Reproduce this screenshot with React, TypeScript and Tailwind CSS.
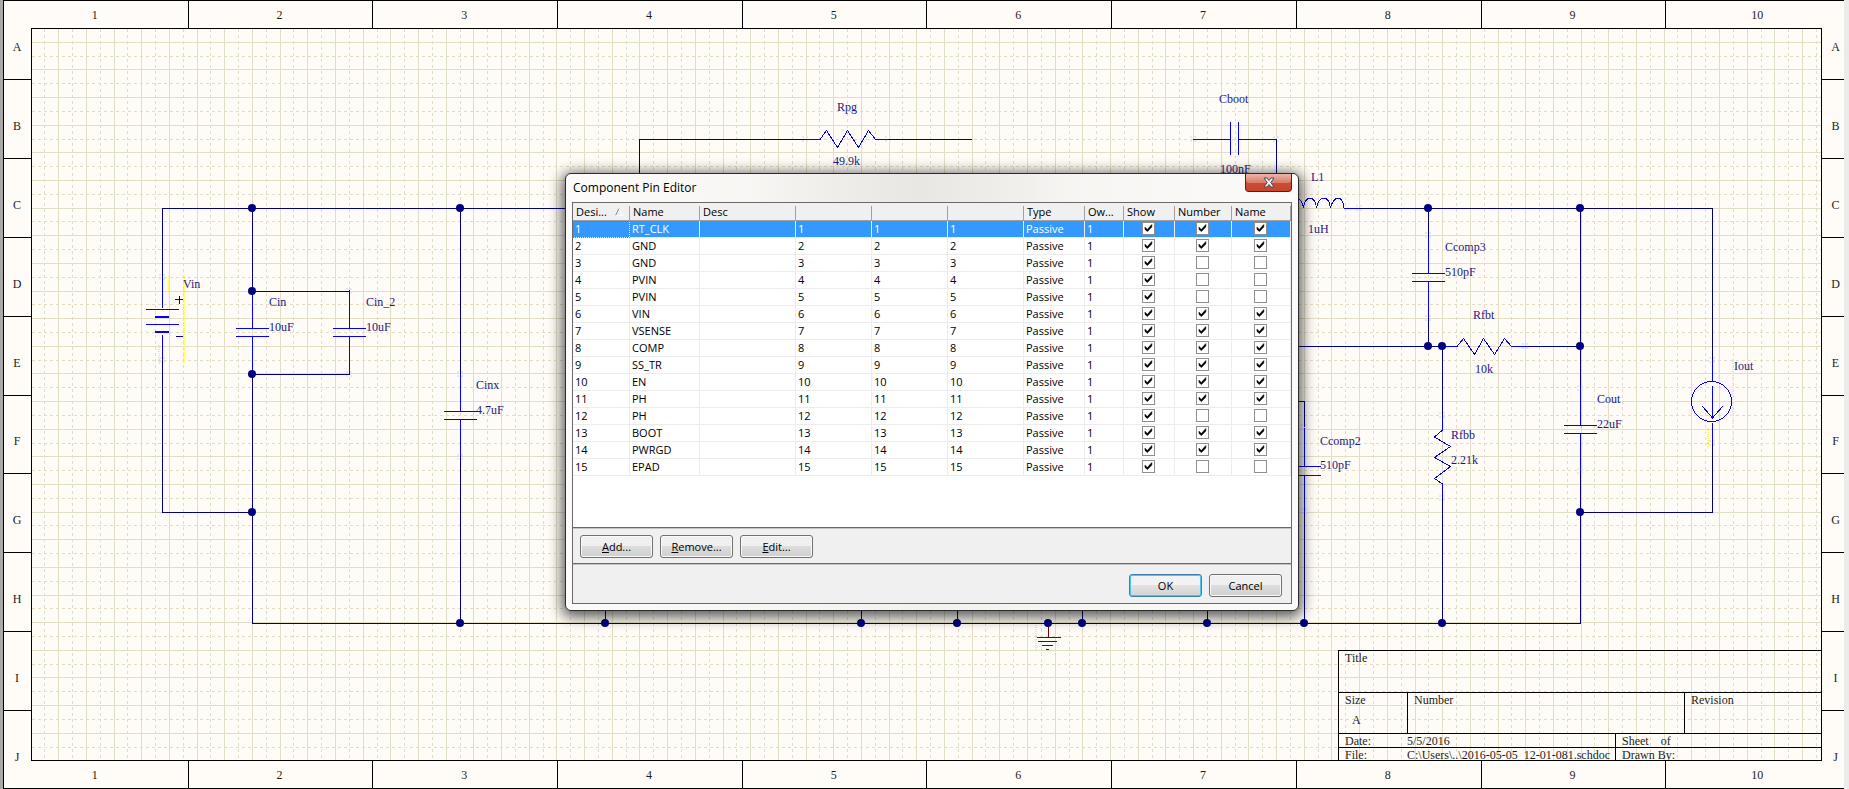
import type { ReactNode } from "react";

const COLUMNS = [1, 2, 3, 4, 5, 6, 7, 8, 9, 10];
const ROWS = ["A", "B", "C", "D", "E", "F", "G", "H", "I", "J"];

type Pin = { id: number; name: string; visible: boolean };

const PINS: Pin[] = [
  { id: 1, name: "RT_CLK", visible: true },
  { id: 2, name: "GND", visible: true },
  { id: 3, name: "GND", visible: false },
  { id: 4, name: "PVIN", visible: false },
  { id: 5, name: "PVIN", visible: false },
  { id: 6, name: "VIN", visible: true },
  { id: 7, name: "VSENSE", visible: true },
  { id: 8, name: "COMP", visible: true },
  { id: 9, name: "SS_TR", visible: true },
  { id: 10, name: "EN", visible: true },
  { id: 11, name: "PH", visible: true },
  { id: 12, name: "PH", visible: false },
  { id: 13, name: "BOOT", visible: true },
  { id: 14, name: "PWRGD", visible: true },
  { id: 15, name: "EPAD", visible: false },
];

const WIRES = [
  "M162.5 276V208.5H1289",
  "M162.5 360V512.5H252",
  "M252.5 208V291.5H349.5",
  "M349.5 374.5H252.5V623.5H1580.5V471",
  "M460.5 208V373M460.5 457V623",
  "M639.5 200V139.5H805M888 139.5H972",
  "M1276.5 139V200",
  "M1359 208.5H1712.5V360",
  "M1428.5 208V235M1428.5 319V346",
  "M1100 346.5H1442M1528 346.5H1580",
  "M1580.5 208V388",
  "M1712.5 444V512.5H1580",
  "M1442.5 346V415M1442.5 498V623",
  "M1290 401.5H1304.5V427M1304.5 512V623",
  "M605.5 600V623M861.5 600V623M957.5 600V623M1082.5 600V623M1207.5 600V623",
];

const JUNCTIONS = [
  [252, 208], [460, 208], [252, 291], [252, 374], [252, 512],
  [1428, 208], [1580, 208], [1428, 346], [1442, 346], [1580, 346], [1580, 512],
  [460, 623], [605, 623], [861, 623], [957, 623], [1048, 623],
  [1082, 623], [1207, 623], [1304, 623], [1442, 623],
];

// Pin hot spots
const HOTSPOTS = [
  [162, 277], [162, 360], [349, 291], [349, 374], [460, 374], [460, 457],
  [805, 139], [888, 139], [1193, 139], [1276, 139], [1359, 208],
  [1428, 235], [1428, 318], [1525, 346], [1442, 415], [1442, 498],
  [1580, 388], [1580, 471], [1712, 360], [1712, 443], [1304, 427], [1304, 511],
];

const LABELS: [number, number, string][] = [
  [183, 288, "Vin"],
  [269, 306, "Cin"],
  [269, 331, "10uF"],
  [366, 306, "Cin_2"],
  [366, 331, "10uF"],
  [476, 389, "Cinx"],
  [476, 414, "4.7uF"],
  [837, 111, "Rpg"],
  [833, 165, "49.9k"],
  [1219, 103, "Cboot"],
  [1220, 173, "100nF"],
  [1311, 181, "L1"],
  [1308, 233, "1uH"],
  [1445, 251, "Ccomp3"],
  [1445, 276, "510pF"],
  [1473, 319, "Rfbt"],
  [1475, 373, "10k"],
  [1451, 439, "Rfbb"],
  [1451, 464, "2.21k"],
  [1597, 403, "Cout"],
  [1597, 428, "22uF"],
  [1734, 370, "Iout"],
  [1320, 445, "Ccomp2"],
  [1320, 469, "510pF"],
];

function SheetGrid() {
  const paths: ReactNode[] = [];
  for (let i = 1; i < 130; i++) {
    const x = Math.floor(31 + (i * 27.68) / 2) + 0.5;
    paths.push(
      <path key={`v${i}`} d={`M${x} 29V2000`} strokeDasharray={i % 2 ? "3 3" : undefined} />
    );
  }
  for (let i = 1; i < 54; i++) {
    const y = Math.floor(760.9 - (i * 27.64) / 2) + 0.5;
    paths.push(
      <path key={`h${i}`} d={`M32 ${y}H4000`} strokeDasharray={i % 2 ? "3 3" : undefined} />
    );
  }
  return <g stroke="#e3ddc5">{paths}</g>;
}

function Capacitor({ x, y, gap = 8 }: { x: number; y: number; gap?: number }) {
  const c = x + 0.5;
  return (
    <path
      d={`M${c} ${y - 38}V${y}M${x - 16} ${y + 0.5}h33M${x - 16} ${y + gap + 0.5}h33M${c} ${y + gap}v38`}
    />
  );
}

function Schematic() {
  return (
    <svg className="absolute inset-0 size-full" aria-label="Schematic">
      <g transform="translate(-32 -29)" fill="none" shapeRendering="crispEdges">
        <SheetGrid />

        <g fill="#e4ebf7">
          {HOTSPOTS.map(([x, y]) => (
            <path
              key={`${x}-${y}`}
              d={`M${x - 3} ${y - 3}h2v2h-2zM${x + 1} ${y - 3}h2v2h-2zM${x - 3} ${y + 1}h2v2h-2zM${x + 1} ${y + 1}h2v2h-2z`}
            />
          ))}
        </g>

        <path d={WIRES.join("")} stroke="#000080" />

        <g stroke="#0000ff">
          {/* Battery */}
          <path d="M162.5 276V308M146 309.5H179M146 324.5H179M162.5 335V360" />
          <path d="M155 317H169M155 332H169" strokeWidth="2" />
          <path d="M175 299.5H183M179.5 296V304M176 336.5H183" stroke="#0000c8" />

          <Capacitor x={252} y={328} />
          <Capacitor x={349} y={328} />
          <Capacitor x={460} y={411} />
          <Capacitor x={1428} y={273} />
          <Capacitor x={1580} y={425} />
          <Capacitor x={1304} y={466} gap={9} />
          <path d="M1193 139.5H1230M1230.5 122V155M1238.5 122V155M1238 139.5H1276" />

          {/* Resistors */}
          <path d="M805 139.5H820L826.5 130.5L837.5 147.5L847.5 130.5L858.5 147.5L868.5 130.5L875.5 139.5H888" />
          <path d="M1442 346.5H1457L1463.5 338.5L1474.5 354.5L1483.5 338.5L1494.5 354.5L1504.5 338.5L1511.5 346.5H1528" />
          <path d="M1442.5 415V430L1434.5 437L1450.5 446.5L1434.5 457.5L1450.5 466.5L1434.5 478.5L1442.5 484V498" />

          {/* Inductor */}
          <path d="M1289.5 208C1291 195 1301 195 1303.5 208C1305 195 1315 195 1316.5 208C1319 195 1329 195 1330.5 208C1333 195 1344 195 1343.5 208M1344 208.5H1359" />

          {/* Current source */}
          <path d="M1712.5 360V381M1712.5 386V418M1702.5 406.5L1712.5 418L1722.5 406.5M1712.5 423V444" />
          <circle cx="1711.5" cy="401.5" r="20" />
        </g>

        <path
          d="M1048.5 623V637M1035 637.5H1061M1038 641.5H1057M1042 645.5H1053M1046 649.5H1049"
          stroke="#800000"
        />

        <path
          d="M168.5 276V294M184 276V364M158.5 345V364M1718.5 359V378M1732.5 359V447M1707.5 428V447M1035.5 625V650"
          stroke="#ffee66"
          strokeDasharray="1 1"
          strokeWidth="2"
        />

        <g fill="#000080" shapeRendering="auto">
          {JUNCTIONS.map(([x, y]) => (
            <circle key={`${x}-${y}`} cx={x} cy={y} r="4" />
          ))}
        </g>

        <g className="fill-[#1a1a80] text-[12px]">
          {LABELS.map(([x, y, text]) => (
            <text key={`${x}-${y}`} x={x} y={y}>
              {text}
            </text>
          ))}
        </g>
      </g>
    </svg>
  );
}

function ColumnRuler({ bottom = false }: { bottom?: boolean }) {
  return (
    <div
      className={
        bottom
          ? "col-start-1 row-start-1 grid h-7 grid-cols-10 self-end border-b border-black"
          : "col-start-1 row-start-1 grid h-7 grid-cols-10 self-start border-t border-black"
      }
    >
      {COLUMNS.map((n) => (
        <div key={n} className="flex items-center justify-center border-l border-black pr-0.5">
          {n}
        </div>
      ))}
    </div>
  );
}

function RowRuler({ right = false }: { right?: boolean }) {
  return (
    <div
      className={
        right
          ? "col-start-1 row-start-1 grid w-7 grid-rows-10 justify-self-end"
          : "col-start-1 row-start-1 grid w-7 grid-rows-10 justify-self-start border-l border-black"
      }
    >
      {ROWS.map((r) => (
        <div
          key={r}
          className="flex items-center justify-center border-t border-black pr-px pt-3.5"
        >
          {r}
        </div>
      ))}
    </div>
  );
}

function TitleBlock() {
  return (
    <div className="relative w-[483px] self-end whitespace-nowrap border-l border-black leading-[14px]">
      <div className="h-[42px] border-t border-black pl-1.5">Title</div>
      <div className="flex h-[41px] border-t border-black">
        <div className="w-[68px] pl-1.5">
          Size
          <div className="pl-[7px] pt-1.5">A</div>
        </div>
        <div className="flex-1 border-l border-black pl-1.5">Number</div>
        <div className="w-[137px] border-l border-black pl-1.5">Revision</div>
      </div>
      <div className="flex h-[14px] border-t border-black">
        <div className="w-[68px] pl-1.5">Date:</div>
        <div className="flex-1">5/5/2016</div>
        <div className="flex w-[206px] gap-3 border-l border-black pl-1.5">
          <span>Sheet</span>
          <span>of</span>
        </div>
      </div>
      <div className="flex h-[13px] border-t border-black leading-[14px]">
        <div className="w-[68px] pl-1.5">File:</div>
        <div className="w-0 flex-1">C:\Users\..\2016-05-05_12-01-081.schdoc</div>
        <div className="w-[206px] border-l border-black pl-1.5">Drawn By:</div>
      </div>
    </div>
  );
}

function HeaderCell({ children }: { children?: ReactNode }) {
  return (
    <th className="h-[18px] border-b border-[#a0a0a0] bg-[#f0f0f0] p-0 pt-0.5 text-left font-normal">
      <div className="flex h-[14px] items-center justify-between border-r border-[#a0a0a0] pb-0.5 pl-[3px] pr-1.5 leading-[14px]">
        {children}
      </div>
    </th>
  );
}

function Cell({ selected, children }: { selected: boolean; children?: ReactNode }) {
  return (
    <td
      className={
        selected
          ? "h-[17px] border-b border-r border-[#ececec] bg-[#3399ff] p-0 pl-0.5 text-white"
          : "h-[17px] border-b border-r border-[#ececec] p-0 pl-0.5"
      }
    >
      {children}
    </td>
  );
}

function CheckCell({ selected, checked, label }: { selected: boolean; checked: boolean; label: string }) {
  return (
    <td
      className={
        selected
          ? "h-[17px] border-b border-r border-[#ececec] bg-[#3399ff] p-0 pb-px pr-0.5"
          : "h-[17px] border-b border-r border-[#ececec] p-0 pb-px pr-0.5"
      }
    >
      <label className="mx-auto grid size-[13px]">
        <input
          type="checkbox"
          defaultChecked={checked}
          aria-label={label}
          className="peer col-start-1 row-start-1 size-[13px] appearance-none border border-[#8e8f8f] bg-white"
        />
        <svg
          viewBox="0 0 13 13"
          className="pointer-events-none invisible col-start-1 row-start-1 size-[13px] peer-checked:visible"
        >
          <path d="M3 5.2L5.3 7.6L9.8 2.6V5L5.4 9.6L3 7.4Z" fill="#000" stroke="#000" strokeWidth="0.6" />
        </svg>
      </label>
    </td>
  );
}

function PinTable() {
  return (
    <table className="w-full table-fixed border-separate border-spacing-0 text-[11px] leading-4">
      <colgroup>
        <col className="w-[57px]" />
        <col className="w-[70px]" />
        <col className="w-[96px]" />
        <col className="w-[76px]" />
        <col className="w-[76px]" />
        <col className="w-[76px]" />
        <col className="w-[61px]" />
        <col className="w-[39px]" />
        <col className="w-[51px]" />
        <col className="w-[57px]" />
        <col className="w-[59px]" />
      </colgroup>
      <thead>
        <tr>
          <HeaderCell>
            Desi...
            <svg viewBox="0 0 8 8" className="size-2" fill="none">
              <path d="M0.5 7.5L4 0.5" stroke="#8a8a8a" />
              <path d="M4 0.5L7.5 7.5H0.5" stroke="#fff" />
            </svg>
          </HeaderCell>
          <HeaderCell>Name</HeaderCell>
          <HeaderCell>Desc</HeaderCell>
          <HeaderCell />
          <HeaderCell />
          <HeaderCell />
          <HeaderCell>Type</HeaderCell>
          <HeaderCell>Ow...</HeaderCell>
          <HeaderCell>Show</HeaderCell>
          <HeaderCell>Number</HeaderCell>
          <HeaderCell>Name</HeaderCell>
        </tr>
      </thead>
      <tbody>
        {PINS.map((pin) => {
          const selected = pin.id === 1;
          return (
            <tr key={pin.id}>
              {selected ? (
                <td className="h-[17px] border-b border-r border-[#ececec] bg-[#3399ff] p-0 pl-0.5 text-white outline-1 -outline-offset-1 outline-dotted outline-[#cc6600]">
                  {pin.id}
                </td>
              ) : (
                <Cell selected={false}>{pin.id}</Cell>
              )}
              <Cell selected={selected}>{pin.name}</Cell>
              <Cell selected={selected} />
              <Cell selected={selected}>{pin.id}</Cell>
              <Cell selected={selected}>{pin.id}</Cell>
              <Cell selected={selected}>{pin.id}</Cell>
              <Cell selected={selected}>Passive</Cell>
              <Cell selected={selected}>1</Cell>
              <CheckCell selected={selected} checked label={`Show pin ${pin.id}`} />
              <CheckCell selected={selected} checked={pin.visible} label={`Show number of pin ${pin.id}`} />
              <CheckCell selected={selected} checked={pin.visible} label={`Show name of pin ${pin.id}`} />
            </tr>
          );
        })}
      </tbody>
    </table>
  );
}

function DialogButton({ primary = false, children }: { primary?: boolean; children: ReactNode }) {
  return (
    <button
      type="button"
      className={
        primary
          ? "h-[23px] w-[73px] rounded-[3px] border border-[#3c7fb1] bg-linear-to-b from-[#f2f2f2] from-50% via-[#e2e2e2] via-50% to-[#d2d2d2] text-[11px] leading-4 shadow-[inset_0_0_0_1px_#48c8f0]"
          : "h-[23px] w-[73px] rounded-[3px] border border-[#707070] bg-linear-to-b from-[#f0f0f0] from-50% via-[#dddddd] via-50% to-[#cfcfcf] text-[11px] leading-4 shadow-[inset_0_0_0_1px_#fafafa]"
      }
    >
      {children}
    </button>
  );
}

function PinEditorDialog() {
  return (
    <div
      role="dialog"
      aria-label="Component Pin Editor"
      className="absolute left-[565px] top-[173px] w-[734px] rounded-[6px] border border-[#2b2b2b] bg-[#f7f5f2] bg-linear-to-r from-[#fcfbf9] via-[#f4f2ef] to-[#fcfbf9] px-1.5 pb-1.5 font-['Open_Sans','Noto_Sans',sans-serif] text-black shadow-[0_3px_14px_3px_rgba(0,0,0,0.65)]"
    >
      {/* Title bar */}
      <div className="flex h-7 items-start justify-between bg-linear-to-r from-transparent from-25% via-[#e9e7e3] via-48% to-transparent to-70%">
        <h1 className="pl-px pt-1.5 text-[12px] leading-4">Component Pin Editor</h1>
        <button
          type="button"
          aria-label="Close"
          className="flex h-[18px] w-[47px] items-center justify-center rounded-b-[4px] border border-t-0 border-[#5e1a14] bg-linear-to-b from-[#eeb5a8] via-[#d98272] via-45% to-[#d9694c] shadow-[inset_0_-8px_0_rgba(190,45,15,0.6)]"
        >
          <svg viewBox="0 0 12 11" className="h-[11px] w-3">
            <path
              d="M1 1H4L6 3.5L8 1H11L7.8 5.5L11 10H8L6 7.5L4 10H1L4.2 5.5Z"
              fill="#f4f4f4"
              stroke="#4a4a5c"
            />
          </svg>
        </button>
      </div>

      <div className="border border-[#696969] bg-[#f0f0f0]">
        <div className="h-[324px] bg-white">
          <PinTable />
        </div>
        <div className="flex gap-[7px] border-t border-[#696969] px-[7px] pb-[5px] pt-[7px] shadow-[inset_0_1px_0_#c4c4c4]">
          <DialogButton>
            <u>A</u>dd...
          </DialogButton>
          <DialogButton>
            <u>R</u>emove...
          </DialogButton>
          <DialogButton>
            <u>E</u>dit...
          </DialogButton>
        </div>
        <div className="flex h-10 items-center justify-end gap-[7px] border-t border-[#696969] px-[9px] pt-1 shadow-[inset_0_1px_0_#c4c4c4]">
          <DialogButton primary>OK</DialogButton>
          <DialogButton>Cancel</DialogButton>
        </div>
      </div>
    </div>
  );
}

export default function App() {
  return (
    <div className="relative flex min-h-screen overflow-hidden bg-[#a9a9a9] font-['Liberation_Serif','Times_New_Roman',serif] text-[12px] text-[#1c1c1c]">
      <main className="-mr-px ml-[3px] grid flex-1 bg-[#fffcf7]">
        <ColumnRuler />
        <ColumnRuler bottom />
        <RowRuler />
        <RowRuler right />
        <div className="relative col-start-1 row-start-1 m-7 flex justify-end overflow-hidden border border-black bg-[#fffcf7]">
          <Schematic />
          <TitleBlock />
        </div>
      </main>

      {/* Edge of the document window */}
      <div className="absolute inset-y-0 right-0 w-[5px] bg-[#ebebeb]" />

      <PinEditorDialog />
    </div>
  );
}
